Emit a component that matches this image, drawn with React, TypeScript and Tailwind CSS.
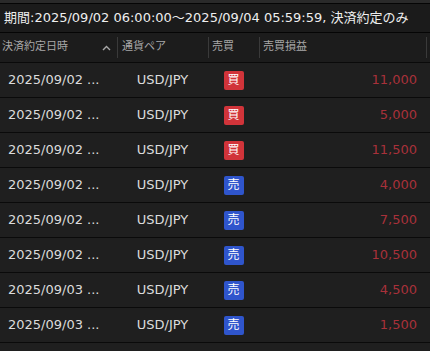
const rows = [
  { date: '2025/09/02 ...', side: 'buy', pnl: '11,000' },
  { date: '2025/09/02 ...', side: 'buy', pnl: '5,000' },
  { date: '2025/09/02 ...', side: 'buy', pnl: '11,500' },
  { date: '2025/09/02 ...', side: 'sell', pnl: '4,000' },
  { date: '2025/09/02 ...', side: 'sell', pnl: '7,500' },
  { date: '2025/09/02 ...', side: 'sell', pnl: '10,500' },
  { date: '2025/09/03 ...', side: 'sell', pnl: '4,500' },
  { date: '2025/09/03 ...', side: 'sell', pnl: '1,500' },
]

const font = { fontFamily: '"DejaVu Sans", "Noto Sans CJK JP", sans-serif' }

export default function App() {
  return (
    <div className="w-[430px] h-[351px] overflow-hidden bg-[#1e1e1e] text-[#dcdcdc]" style={font}>
      <div className="h-[3px] bg-[#2a2a2a]" />
      <div className="h-[29px] border-t border-[#050505] bg-[#1b1b1b] flex items-center pl-[4px] text-[13px] text-[#eeeeee] whitespace-nowrap">
        期間:2025/09/02 06:00:00～2025/09/04 05:59:59, 決済約定のみ
      </div>

      {/* column header */}
      <div className="h-[30px] border-t border-[#050505] bg-[#1c1c1c] grid grid-cols-[117px_91px_51px_168px] text-[11px] text-[#a8a8a8]">
        <div className="flex items-center justify-between pl-[2px] pr-[6px]">
          <span>決済約定日時</span>
          <svg width="9" height="6" viewBox="0 0 9 6" className="mt-[1px]">
            <path d="M1 5 L4.5 1.5 L8 5" fill="none" stroke="#a8a8a8" strokeWidth="1.4" />
          </svg>
        </div>
        <div className="flex items-center pl-[4px] border-l border-[#3a3a3a] my-[4px]">通貨ペア</div>
        <div className="flex items-center pl-[3px] border-l border-[#3a3a3a] my-[4px]">売買</div>
        <div className="flex items-center pl-[3px] border-l border-r border-[#3a3a3a] my-[4px]">売買損益</div>
      </div>

      {rows.map((r, i) => (
        <div
          key={i}
          className="h-[35px] border-t border-[#0a0a0a] bg-[#1f1f1f] grid grid-cols-[117px_91px_51px_169px] items-center text-[13px]"
        >
          <div className="pl-[8px] whitespace-nowrap">{r.date}</div>
          <div className="text-center">USD/JPY</div>
          <div className="flex justify-center">
            <span
              className={`w-[20px] h-[19px] rounded-[2px] flex items-center justify-center text-[12px] text-white ${
                r.side === 'buy' ? 'bg-[#d1343a]' : 'bg-[#2f55cc]'
              }`}
            >
              {r.side === 'buy' ? '買' : '売'}
            </span>
          </div>
          <div className="text-right pr-[11px] text-[#a8313a]">{r.pnl}</div>
        </div>
      ))}
      <div className="h-[10px] border-t border-[#0a0a0a] bg-[#1f1f1f]" />
    </div>
  )
}
